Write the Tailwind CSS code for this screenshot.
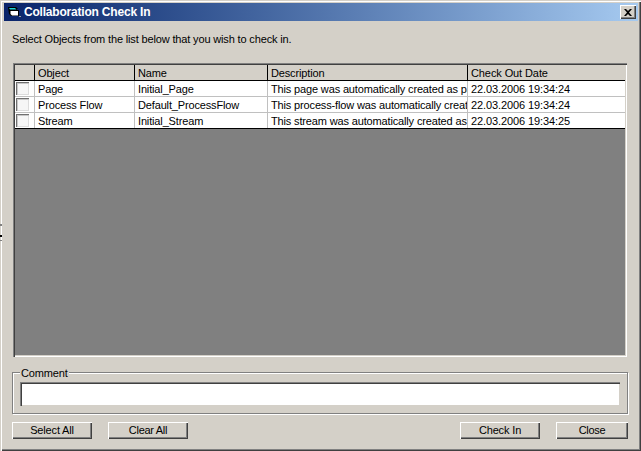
<!DOCTYPE html>
<html lang="en">
<head>
    <meta charset="UTF-8">
    <title>Collaboration Check In</title>
    <script src="https://cdn.jsdelivr.net/npm/@tailwindcss/browser@4"></script>
</head>
<body class="w-[641px] h-[451px] overflow-hidden bg-[#d4d0c8] font-['Liberation_Sans',sans-serif] text-[11px] leading-[13px] text-black tracking-[-0.15px]">
    <!-- window frame -->
    <div class="relative w-[641px] h-[451px] flex flex-col pt-[3px] pl-[4px] pr-[3px] pb-[4px] shadow-[inset_1px_1px_0_#d4d0c8,inset_2px_2px_0_#ffffff,inset_-1px_-1px_0_#404040,inset_-2px_-2px_0_#808080]">

        <!-- specks on the left edge -->
        <div class="absolute left-0 top-[224px] w-[2px] h-[2px] bg-[#808080]"></div>
        <div class="absolute left-0 top-[235px] w-[2px] h-[2px] bg-black"></div>
        <div class="absolute left-0 top-[240px] w-[2px] h-[1px] bg-[#808080]"></div>

        <!-- title bar -->
        <div class="h-[18px] flex items-center pl-[4px] pr-[2px] bg-gradient-to-r from-[#0a246a] to-[#a6caf0] shrink-0">
            <svg class="w-[13px] h-[11px] shrink-0" viewBox="0 0 13 11">
                <path d="M0 0h8l2 2h-1v1h2v6H3L1 7z" fill="#000"/>
                <path d="M1 1h6l1.500 1.500H2z" fill="#22d3d8"/>
                <path d="M2.500 4h7.500v4.500H4L2.500 7z" fill="#fff"/>
                <path d="M11 9h2v1h-2z" fill="#a0a0a0"/>
            </svg>
            <span class="ml-[3px] text-white font-bold text-[12px] leading-[13px] tracking-[-0.2px]">Collaboration Check In</span>
            <button class="ml-auto w-[16px] h-[14px] flex items-center justify-center bg-[#d4d0c8] shadow-[inset_1px_1px_0_#ffffff,inset_-1px_-1px_0_#404040,inset_-2px_-2px_0_#808080]">
                <svg class="w-[8px] h-[7px]" viewBox="0 0 8 7"><path d="M0 0h2l2 2 2-2h2L5 3.500 8 7H6L4 5 2 7H0l3-3.500z" fill="#000"/></svg>
            </button>
        </div>

        <!-- client area -->
        <div class="flex-1 flex flex-col pl-[8px] pr-[10px]">
            <p class="mt-[12px] h-[13px] whitespace-nowrap">Select Objects from the list below that you wish to check in.</p>

            <!-- grid -->
            <div class="mt-[17px] ml-[1px] h-[294px] w-[614px] flex flex-col p-[2px] bg-[#808080] shadow-[inset_1px_1px_0_#808080,inset_2px_2px_0_#404040,inset_-1px_-1px_0_#ffffff,inset_-2px_-2px_0_#d4d0c8]">
                <div class="flex h-[16px] bg-[#d4d0c8] border-b border-black">
                    <div class="w-[20px] border-r border-black shrink-0"></div>
                    <div class="w-[100px] pl-[3px] pt-[2px] border-r border-black shrink-0">Object</div>
                    <div class="w-[133px] pl-[3px] pt-[2px] border-r border-black shrink-0">Name</div>
                    <div class="w-[200px] pl-[3px] pt-[2px] border-r border-black shrink-0">Description</div>
                    <div class="flex-1 pl-[3px] pt-[2px] tracking-[-0.1px]">Check Out Date</div>
                </div>

                <div class="flex h-[16px] bg-white border-b border-[#c0c0c0]">
                    <div class="w-[20px] border-r border-[#c0c0c0] shrink-0 pl-[1px] pt-[1px]"><div class="w-[13px] h-[13px] bg-[#f6f6f6] shadow-[inset_1px_1px_0_#707070,inset_2px_2px_0_#c8c8c8,inset_-1px_-1px_0_#dcdcdc]"></div></div>
                    <div class="w-[100px] pl-[3px] pt-[2px] border-r border-[#c0c0c0] shrink-0">Page</div>
                    <div class="w-[133px] pl-[3px] pt-[2px] border-r border-[#c0c0c0] shrink-0">Initial_Page</div>
                    <div class="w-[200px] pl-[3px] pt-[2px] border-r border-[#c0c0c0] shrink-0 overflow-hidden whitespace-nowrap">This page was automatically created as part</div>
                    <div class="flex-1 pl-[3px] pt-[2px] tracking-[-0.1px]">22.03.2006 19:34:24</div>
                </div>
                <div class="flex h-[16px] bg-white border-b border-[#c0c0c0]">
                    <div class="w-[20px] border-r border-[#c0c0c0] shrink-0 pl-[1px] pt-[1px]"><div class="w-[13px] h-[13px] bg-[#f6f6f6] shadow-[inset_1px_1px_0_#707070,inset_2px_2px_0_#c8c8c8,inset_-1px_-1px_0_#dcdcdc]"></div></div>
                    <div class="w-[100px] pl-[3px] pt-[2px] border-r border-[#c0c0c0] shrink-0">Process Flow</div>
                    <div class="w-[133px] pl-[3px] pt-[2px] border-r border-[#c0c0c0] shrink-0">Default_ProcessFlow</div>
                    <div class="w-[200px] pl-[3px] pt-[2px] border-r border-[#c0c0c0] shrink-0 overflow-hidden whitespace-nowrap">This process-flow was automatically created</div>
                    <div class="flex-1 pl-[3px] pt-[2px] tracking-[-0.1px]">22.03.2006 19:34:24</div>
                </div>
                <div class="flex h-[16px] bg-white border-b border-black">
                    <div class="w-[20px] border-r border-[#c0c0c0] shrink-0 pl-[1px] pt-[1px]"><div class="w-[13px] h-[13px] bg-[#f6f6f6] shadow-[inset_1px_1px_0_#707070,inset_2px_2px_0_#c8c8c8,inset_-1px_-1px_0_#dcdcdc]"></div></div>
                    <div class="w-[100px] pl-[3px] pt-[2px] border-r border-[#c0c0c0] shrink-0">Stream</div>
                    <div class="w-[133px] pl-[3px] pt-[2px] border-r border-[#c0c0c0] shrink-0">Initial_Stream</div>
                    <div class="w-[200px] pl-[3px] pt-[2px] border-r border-[#c0c0c0] shrink-0 overflow-hidden whitespace-nowrap">This stream was automatically created as part</div>
                    <div class="flex-1 pl-[3px] pt-[2px] tracking-[-0.1px]">22.03.2006 19:34:25</div>
                </div>
            </div>

            <!-- comment group -->
            <div class="relative mt-[15px] h-[42px] w-[616px] border border-[#808080] shadow-[1px_1px_0_#ffffff,inset_1px_1px_0_#ffffff] px-[7px] pt-[9px]">
                <span class="absolute left-[7px] -top-[6px] px-[1px] bg-[#d4d0c8]">Comment</span>
                <div class="h-[24px] bg-white shadow-[inset_1px_1px_0_#808080,inset_2px_2px_0_#404040,inset_-1px_-1px_0_#d4d0c8]"></div>
            </div>

            <!-- buttons -->
            <div class="mt-[8px] flex w-[616px]">
                <button class="w-[80px] h-[17px] bg-[#d4d0c8] shadow-[inset_1px_1px_0_#ffffff,inset_-1px_-1px_0_#404040,inset_-2px_-2px_0_#808080]">Select All</button>
                <button class="ml-[16px] w-[80px] h-[17px] bg-[#d4d0c8] tracking-[-0.3px] shadow-[inset_1px_1px_0_#ffffff,inset_-1px_-1px_0_#404040,inset_-2px_-2px_0_#808080]">Clear All</button>
                <button class="ml-auto w-[80px] h-[17px] bg-[#d4d0c8] shadow-[inset_1px_1px_0_#ffffff,inset_-1px_-1px_0_#404040,inset_-2px_-2px_0_#808080]">Check In</button>
                <button class="ml-[16px] w-[72px] h-[17px] bg-[#d4d0c8] tracking-[-0.3px] shadow-[inset_1px_1px_0_#ffffff,inset_-1px_-1px_0_#404040,inset_-2px_-2px_0_#808080]">Close</button>
            </div>
        </div>
    </div>
</body>
</html>
